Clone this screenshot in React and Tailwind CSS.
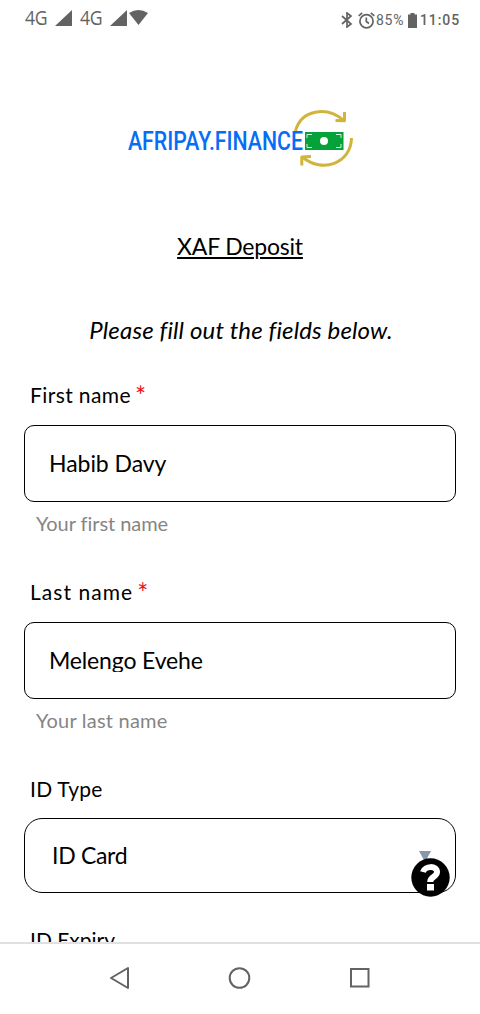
import React from "react";

function NetworkLabel() {
  return (
    <span className="w-[30px] pb-0.5">
      <span className="inline-block origin-left scale-x-[0.86] font-['Open_Sans',sans-serif] text-[20.5px] leading-[30px] tracking-[-0.4px]">4G</span>
    </span>
  );
}

function StatusBar() {
  return (
    <div className="flex h-10 shrink-0 items-start justify-between pl-[25px] pr-5 text-[#636363]">
      <div className="flex h-9 items-center">
        <NetworkLabel />
        <svg width="17" height="16" viewBox="0 0 17 16"><path d="M0 16 17 0V16Z" fill="currentColor" /></svg>
        <span className="w-2" />
        <NetworkLabel />
        <svg width="17" height="16" viewBox="0 0 17 16"><path d="M0 16 17 0V16Z" fill="currentColor" /></svg>
        <svg className="ml-0.5" width="19" height="16" viewBox="0 0 19 16"><path d="M0 3Q9.500-3 19 3L9.500 15Z" fill="currentColor" /></svg>
      </div>
      <div className="flex h-10 items-center font-['Roboto',sans-serif] text-[14px] font-medium">
        <svg width="12" height="16" viewBox="0 0 12 16" fill="none" stroke="currentColor" strokeWidth="1.700"><path d="M1 4 10 12 6 15V1L10 4 1 12" /></svg>
        <svg className="ml-[5px]" width="17" height="17" viewBox="0 0 17 17" fill="none" stroke="currentColor" strokeWidth="1.700"><circle cx="8.500" cy="9.300" r="6.600" /><path d="M8.300 5.500V9.500L11 11.500M.7 3.800 4.200.8M12.800.8 16.300 3.800" /></svg>
        <span className="w-8 pl-px font-normal tracking-[0.7px]">85%</span>
        <svg className="ml-px" width="9" height="15" viewBox="0 0 9 15"><path d="M2.500 0H6.500V1.500H9V15H0V1.500H2.500Z" fill="currentColor" /></svg>
        <span className="ml-[3px] w-10 tracking-[0.9px]">11:05</span>
      </div>
    </div>
  );
}

function Logo() {
  return (
    <svg className="mx-auto block" width="240" height="80" viewBox="0 0 240 80">
      <g fill="none" stroke="#d2b43c" strokeWidth="3" strokeLinejoin="round">
        <path d="M175.500 31C181 9.500 207 6 223 20" />
        <path d="M215.500 20.500 224.500 20.800V12" />
        <path d="M231.500 38C231 64 202 73 183 57.500" />
        <path d="M191 56.500 181.800 57V65.500" />
      </g>
      <text x="8" y="49.500" textLength="175" lengthAdjust="spacingAndGlyphs" fontFamily="Roboto, sans-serif" fontSize="25" fontWeight="500" fill="#066df5">AFRIPAY.FINANCE</text>
      <rect x="185" y="32" width="38.500" height="18" fill="#05a139" />
      <circle cx="204" cy="41" r="4" fill="#fff" />
      <path d="M187 38V34.500H192M216 34.500H221V38M187 44V47.500H192M216 47.500H221V44" fill="none" stroke="#d9f2df" strokeWidth="1" />
    </svg>
  );
}

function Field({ label, labelClass, value, valueClass, hint, hintClass }) {
  return (
    <div className="h-[197px]">
      <div className="flex h-[45px] items-start pl-1.5 text-[21px] leading-[30px]">
        <span className={labelClass}>{label}</span>
        <span className="ml-1 text-[26px] leading-[32px] text-[#ee1111]">*</span>
      </div>
      <div className="flex h-[77px] items-center rounded-[10px] border border-black pb-px pl-6">
        <span className={`block text-[23px] leading-[28px] ${valueClass}`}>{value}</span>
      </div>
      <div className={`pl-3 pt-1.5 text-[20px] leading-[30px] text-[#858585] ${hintClass}`}>{hint}</div>
    </div>
  );
}

export default function App() {
  return (
    <div className="flex h-[1014px] w-[480px] flex-col overflow-hidden bg-white font-['Lato',sans-serif] text-black">
      <StatusBar />
      <main className="h-[902px] shrink-0 overflow-hidden px-6 pt-[60px]">
        <Logo />
        <h1 className="mt-[51px] text-center text-[23px] leading-[30px] tracking-[-0.2px] underline decoration-2 underline-offset-2">XAF Deposit</h1>
        <p className="mt-[54px] pl-0.5 text-center text-[24px] italic leading-[30px] tracking-[0.15px]">Please fill out the fields below.</p>
        <div className="mt-[35px]">
          <Field label="First name" labelClass="tracking-[0.4px]" value="Habib Davy" valueClass="tracking-[-0.05px]" hint="Your first name" hintClass="tracking-[-0.05px]" />
          <Field label="Last name" labelClass="tracking-[1.05px]" value="Melengo Evehe" valueClass="h-[26px] overflow-hidden -translate-y-px tracking-[-0.15px]" hint="Your last name" hintClass="tracking-[0.22px]" />
        </div>
        <div className="h-11 pl-1.5 text-[21px] leading-[30px] tracking-[0.25px]">ID Type</div>
        <div className="relative flex h-[75px] items-center rounded-[18px] border border-black pl-[27px] text-[23px] tracking-[-0.3px]">
          <span>ID Card</span>
          <svg className="absolute left-[394px] top-8" width="12" height="11" viewBox="0 0 12 11"><path d="M0 0H12L6 11Z" fill="#8798a8" /></svg>
          <svg className="absolute left-[386px] top-[39px]" width="39" height="39" viewBox="0 0 39 39">
            <circle cx="19.500" cy="19.500" r="19.200" />
            <path d="M12 14C13.500 8 26 7 26 14C26 19 19.200 18.500 19.200 24" fill="none" stroke="#fff" strokeWidth="6" />
            <rect x="16" y="26" width="7" height="6.500" fill="#fff" />
          </svg>
        </div>
        <div className="mt-8 pl-1.5 text-[21px] leading-[30px]">ID Expiry</div>
      </main>
      <nav className="flex h-[72px] shrink-0 justify-between border-t-2 border-[#e0e0e0] px-[108px] pt-[22px]">
        <svg width="24" height="24" viewBox="0 0 24 24" fill="none" stroke="#636363" strokeWidth="2" strokeLinejoin="round"><path d="M3 12 20 2V22Z" /></svg>
        <svg width="24" height="24" viewBox="0 0 24 24" fill="none" stroke="#636363" strokeWidth="2"><circle cx="11.500" cy="12" r="9.800" /></svg>
        <svg width="24" height="24" viewBox="0 0 24 24" fill="none" stroke="#636363" strokeWidth="2"><rect x="3" y="3" width="17.500" height="17.500" /></svg>
      </nav>
    </div>
  );
}
